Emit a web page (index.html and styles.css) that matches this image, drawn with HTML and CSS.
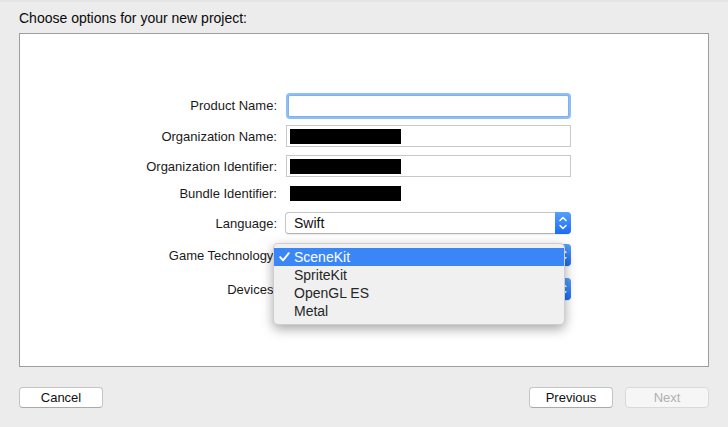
FILE: index.html
```html
<!DOCTYPE html>
<html>
<head>
<meta charset="utf-8">
<link rel="stylesheet" href="styles.css">
</head>
<body>
<div class="window">
  <div class="title">Choose options for your new project:</div>
  <div class="panel">
    <div class="form">
      <div class="row r1">
        <div class="label">Product Name:</div>
        <div class="field text focus"></div>
      </div>
      <div class="row r2">
        <div class="label">Organization Name:</div>
        <div class="field text"><span class="redact"></span></div>
      </div>
      <div class="row r3">
        <div class="label">Organization Identifier:</div>
        <div class="field text"><span class="redact"></span></div>
      </div>
      <div class="row r4">
        <div class="label">Bundle Identifier:</div>
        <div class="field plain"><span class="redact"></span></div>
      </div>
      <div class="row r5">
        <div class="label">Language:</div>
        <div class="field popup"><span class="val">Swift</span><span class="stepper"><svg width="16" height="22" viewBox="0 0 16 22"><path d="M5 8.5 L8 5.5 L11 8.5" fill="none" stroke="#fff" stroke-width="1.5" stroke-linecap="round" stroke-linejoin="round"/><path d="M5 13.5 L8 16.5 L11 13.5" fill="none" stroke="#fff" stroke-width="1.5" stroke-linecap="round" stroke-linejoin="round"/></svg></span></div>
      </div>
      <div class="row r6">
        <div class="label">Game Technology:</div>
        <div class="field popup"><span class="val"></span><span class="stepper"><svg width="16" height="22" viewBox="0 0 16 22"><path d="M5 8.5 L8 5.5 L11 8.5" fill="none" stroke="#fff" stroke-width="1.5" stroke-linecap="round" stroke-linejoin="round"/><path d="M5 13.5 L8 16.5 L11 13.5" fill="none" stroke="#fff" stroke-width="1.5" stroke-linecap="round" stroke-linejoin="round"/></svg></span></div>
      </div>
      <div class="row r7">
        <div class="label">Devices:</div>
        <div class="field popup"><span class="val"></span><span class="stepper"><svg width="16" height="22" viewBox="0 0 16 22"><path d="M5 8.5 L8 5.5 L11 8.5" fill="none" stroke="#fff" stroke-width="1.5" stroke-linecap="round" stroke-linejoin="round"/><path d="M5 13.5 L8 16.5 L11 13.5" fill="none" stroke="#fff" stroke-width="1.5" stroke-linecap="round" stroke-linejoin="round"/></svg></span></div>
      </div>
    </div>
    <div class="menu">
      <div class="item selected"><svg class="check" width="11" height="10" viewBox="0 0 11 10"><path d="M1.2 5.2 L4 8.4 L9.8 1.2" fill="none" stroke="#fff" stroke-width="1.9" stroke-linecap="round" stroke-linejoin="round"/></svg>SceneKit</div>
      <div class="item">SpriteKit</div>
      <div class="item">OpenGL ES</div>
      <div class="item">Metal</div>
    </div>
  </div>
  <div class="footer">
    <div class="btn">Cancel</div>
    <div class="spacer"></div>
    <div class="btn">Previous</div>
    <div class="btn disabled">Next</div>
  </div>
</div>
</body>
</html>
```

FILE: styles.css
```css
html, body {
  margin: 0;
  padding: 0;
}
body {
  background: #ececec;
  font-family: "Liberation Sans", Arial, sans-serif;
  font-size: 13px;
  color: #000;
  width: 728px;
  height: 427px;
  overflow: hidden;
}
.window {
  border-top: 2px solid #e4e4e4;
  padding: 0 19px;
}
.title {
  padding-top: 8px;
  height: 16px;
  line-height: 16px;
  font-size: 14px;
  color: #0a0a0a;
}
.panel {
  position: relative;
  margin-top: 7px;
  height: 332px;
  background: #fff;
  border: 1px solid #9d9d9d;
}
.form {
  padding-top: 60px;
  display: flex;
  flex-direction: column;
}
.row {
  display: flex;
  align-items: center;
}
.r1 { height: 23px; }
.r2 { height: 22px; margin-top: 8px; }
.r3 { height: 22px; margin-top: 8px; }
.r4 { height: 16px; margin-top: 8px; }
.r5 { height: 22px; margin-top: 11px; }
.r6 { height: 22px; margin-top: 10px; }
.r7 { height: 22px; margin-top: 12px; }
.label {
  width: 257px;
  text-align: right;
  color: #1a1a1a;
  white-space: nowrap;
}
.field {
  margin-left: 9px;
  width: 285px;
  height: 100%;
  box-sizing: border-box;
  display: flex;
  align-items: center;
}
.text {
  border: 1px solid #c8c8c8;
  background: #fff;
  padding-left: 3px;
}
.focus {
  margin-left: 11px;
  width: 281px;
  height: 22px;
  border: 1px solid #7fb1ee;
  box-shadow: 0 0 0 2px #8ebef6;
  border-radius: 2px;
}
.plain {
  padding-left: 4px;
}
.redact {
  display: block;
  width: 111px;
  height: 15px;
  background: #000;
}
.popup {
  border: 1px solid #c6c6c6;
  border-bottom-color: #b4b4b4;
  border-radius: 4px;
  background: #fff;
  position: relative;
  padding-left: 8px;
  width: 286px;
  margin-left: 8px;
  box-shadow: 0 0.5px 1px rgba(0,0,0,0.08);
}
.val {
  font-size: 14px;
  color: #111;
  flex: 1;
}
.stepper {
  position: absolute;
  right: -1px;
  top: -1px;
  width: 16px;
  height: 22px;
  border-radius: 0 4px 4px 0;
  background: linear-gradient(#55a2fa, #1a6cf4);
}
.stepper svg {
  display: block;
}
.menu {
  position: absolute;
  left: 253px;
  top: 209px;
  width: 290px;
  padding: 4px 0 4px 0;
  background: #f0f0f0;
  border: 1px solid rgba(0,0,0,0.14);
  border-radius: 5px;
  box-shadow: 0 4px 12px rgba(0,0,0,0.35);
}
.item {
  height: 18px;
  line-height: 18px;
  padding-left: 20px;
  font-size: 14px;
  color: #262626;
  position: relative;
}
.item.selected {
  background: #3a86f7;
  color: #fff;
}
.check {
  position: absolute;
  left: 5px;
  top: 4px;
  display: block;
}
.footer {
  display: flex;
  margin-top: 20px;
  gap: 12px;
}
.spacer {
  flex: 1;
}
.btn {
  width: 84px;
  height: 21px;
  box-sizing: border-box;
  border: 1px solid #c4c4c4;
  border-bottom-color: #a9a9a9;
  border-radius: 4px;
  background: #fff;
  text-align: center;
  line-height: 19px;
  font-size: 13px;
  color: #111;
}
.btn.disabled {
  background: #f6f6f6;
  border-color: #d9d9d9;
  color: #b0b0b0;
}
```
